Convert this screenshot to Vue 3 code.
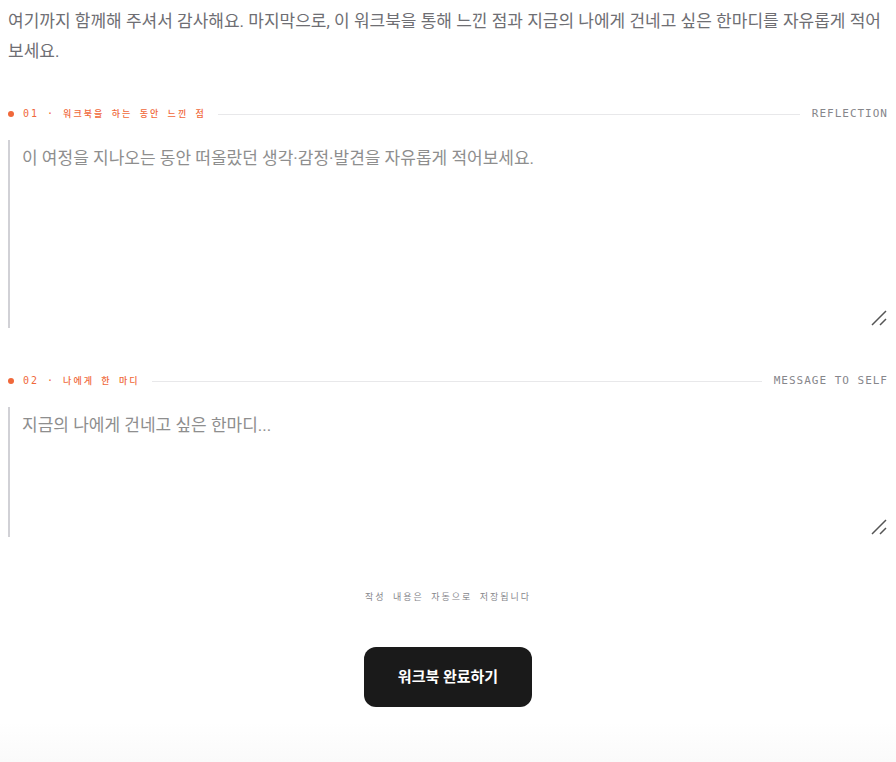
<script setup>
import { reactive } from 'vue'

const sections = [
  { id: 'reflection', no: '01', title: '워크북을 하는 동안 느낀 점', tag: 'REFLECTION', size: 'tall', placeholder: '이 여정을 지나오는 동안 떠올랐던 생각·감정·발견을 자유롭게 적어보세요.' },
  { id: 'message', no: '02', title: '나에게 한 마디', tag: 'MESSAGE TO SELF', size: 'short', placeholder: '지금의 나에게 건네고 싶은 한마디...' },
]

const answers = reactive({ reflection: '', message: '' })
</script>

<template>
  <main class="closing">
    <p class="intro">여기까지 함께해 주셔서 감사해요. 마지막으로, 이 워크북을 통해 느낀 점과 지금의 나에게 건네고 싶은 한마디를 자유롭게 적어보세요.</p>

    <section v-for="s in sections" :key="s.id" class="entry">
      <div class="head">
        <span class="dot"></span>
        <label class="title" :for="s.id"><span class="no">{{ s.no }} · </span>{{ s.title }}</label>
        <span class="line"></span>
        <span class="tag">{{ s.tag }}</span>
      </div>
      <div class="field">
        <textarea :id="s.id" v-model="answers[s.id]" :class="s.size" :placeholder="s.placeholder"></textarea>
        <svg class="grip" viewBox="0 0 16 16" aria-hidden="true">
          <path d="M1 15L15 1M9 15L15 9" />
        </svg>
      </div>
    </section>

    <p class="saved">작성 내용은 자동으로 저장됩니다</p>
    <button type="button" class="done">워크북 완료하기</button>
  </main>
</template>

<style>
body {
  margin: 0;
  background: #fff;
}
</style>

<style scoped>
.closing {
  box-sizing: border-box;
  display: flex;
  flex-direction: column;
  min-height: 100vh;
  padding: 6px 8px 55px;
  font-family: Roboto, "Noto Sans CJK KR", sans-serif;
  background: linear-gradient(to top, #fafafa, #fff 40px);
}

.intro {
  margin: 0 0 39px;
  font-size: 17px;
  line-height: 30px;
  color: #6e6e73;
}

.entry {
  margin-bottom: 44px;
}

.head {
  display: flex;
  align-items: center;
  height: 18px;
  margin-bottom: 17px;
  font-family: "DejaVu Sans Mono", "Noto Sans CJK KR", monospace;
  line-height: 20px;
  white-space: nowrap;
}

.dot {
  width: 6px;
  height: 6px;
  margin-right: 9px;
  border-radius: 50%;
  background: #f0683a;
}

.title {
  font-size: 9px;
  font-weight: 500;
  letter-spacing: 2px;
  color: #f0683a;
}

.no {
  font-size: 10px;
  white-space: pre;
}

.line {
  flex: 1;
  height: 1px;
  margin: 0 12px;
  background: #e8e8ea;
}

.tag {
  font-size: 11px;
  letter-spacing: 1px;
  color: #86868b;
}

.field {
  position: relative;
}

textarea {
  display: block;
  box-sizing: border-box;
  width: 100%;
  padding: 3px 12px;
  border: 0;
  border-left: 2px solid #d1d1d6;
  outline: none;
  background: transparent;
  font: inherit;
  font-size: 17px;
  line-height: 30px;
  color: #1a1a1a;
  resize: none;
}

textarea::placeholder {
  color: #8e8e8e;
  opacity: 1;
}

.tall {
  height: 188px;
}

.short {
  height: 130px;
}

.grip {
  position: absolute;
  right: 1px;
  bottom: 2px;
  width: 16px;
  height: 16px;
  fill: none;
  stroke: #555;
  stroke-width: 1.5;
  pointer-events: none;
}

.saved {
  margin: 7px 0 41px;
  font-family: "DejaVu Sans Mono", "Noto Sans CJK KR", monospace;
  font-size: 9px;
  line-height: 18px;
  letter-spacing: 2px;
  text-align: center;
  color: #86868b;
}

.done {
  align-self: center;
  padding: 18px 34px;
  border: 0;
  border-radius: 12px;
  background: #1a1a1a;
  font: inherit;
  font-size: 15px;
  font-weight: 600;
  line-height: 24px;
  color: #fff;
  cursor: pointer;
}
</style>
